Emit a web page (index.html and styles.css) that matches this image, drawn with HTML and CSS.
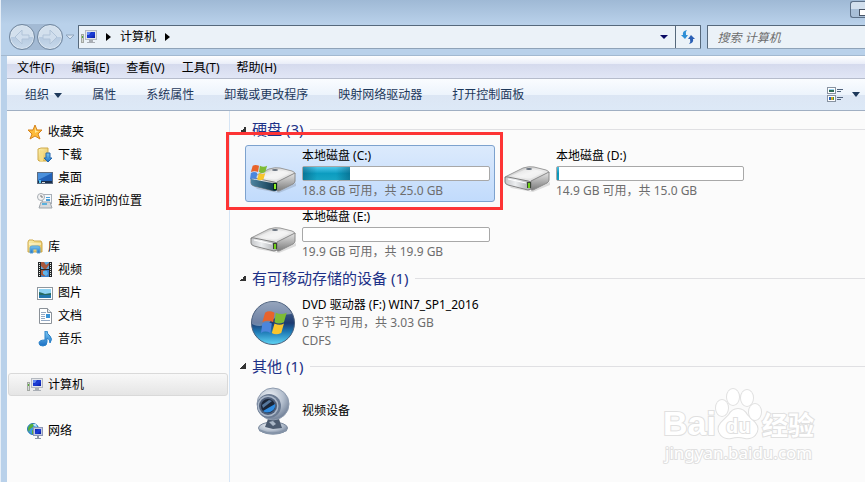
FILE: index.html
```html
<!DOCTYPE html>
<html lang="zh-CN">
<head>
    <meta charset="UTF-8">
    <meta name="viewport" content="width=device-width, initial-scale=1.0">
    <title>计算机</title>
    <link rel="stylesheet" href="styles.css">
</head>
<body>

<!-- shared icons -->
<svg class="defs" width="0" height="0" aria-hidden="true">
    <defs>
        <linearGradient id="screen" x1="0" y1="0" x2="1" y2="1">
            <stop offset="0" stop-color="#0a1ea8"/>
            <stop offset="0.5" stop-color="#1d3fd8"/>
            <stop offset="1" stop-color="#0818a0"/>
        </linearGradient>
        <linearGradient id="driveTop" x1="0" y1="0" x2="1" y2="1">
            <stop offset="0" stop-color="#b0b0b0"/>
            <stop offset="0.5" stop-color="#ececec"/>
            <stop offset="1" stop-color="#d2d2d2"/>
        </linearGradient>
        <linearGradient id="driveSide" x1="0" y1="0" x2="0" y2="1">
            <stop offset="0" stop-color="#e6e6e6"/>
            <stop offset="1" stop-color="#7b7b7b"/>
        </linearGradient>
        <linearGradient id="driveFront" x1="0" y1="0" x2="1" y2="0">
            <stop offset="0" stop-color="#c4c6c9"/>
            <stop offset="0.4" stop-color="#eceef0"/>
            <stop offset="1" stop-color="#a4a7aa"/>
        </linearGradient>
        <linearGradient id="driveDark" x1="0" y1="0" x2="1" y2="0">
            <stop offset="0" stop-color="#4d84a0"/>
            <stop offset="1" stop-color="#0d3348"/>
        </linearGradient>
        <linearGradient id="folder" x1="0" y1="0" x2="1" y2="1">
            <stop offset="0" stop-color="#fdf3b4"/>
            <stop offset="1" stop-color="#e2b94c"/>
        </linearGradient>
        <linearGradient id="blue" x1="0" y1="0" x2="0" y2="1">
            <stop offset="0" stop-color="#7cc8f2"/>
            <stop offset="1" stop-color="#1a6fc4"/>
        </linearGradient>
        <symbol id="computer" viewBox="0 0 16 16">
            <rect x="0.5" y="5.5" width="2" height="8" fill="#d5d9d5" stroke="#a3a8a3"/>
            <rect x="1" y="7" width="1" height="2" fill="#55b034"/>
            <rect x="4.500" y="1.500" width="11" height="9" fill="#e4e6ea" stroke="#b4b9c0"/>
            <rect x="6" y="3" width="8" height="6" fill="url(#screen)"/>
            <path d="M6 3h4l-2 3H6z" fill="#5f86f0"/>
            <path d="M8 11h4v2h2v1H6v-1h2z" fill="#a9aeb5"/>
        </symbol>
        <symbol id="drive" viewBox="0 0 48 28">
            <path d="M6 22 28 27 47 18v3L30 28 8 24z" fill="#000" opacity="0.12"/>
            <path d="M2 13 20 4q6-2 11-1l12 3q3 1 3 3L28 18 2 14z" fill="url(#driveTop)" stroke="#9a9a9a"/>
            <path d="M8 12 21 6q5-2 9-1l11 3-12 6q-3 1-7 0z" fill="#fff" opacity="0.45"/>
            <path d="M28 17 46 8v8q0 2-2 3L30 26h-2z" fill="url(#driveSide)" stroke="#8a8a8a"/>
            <path d="M2 14q0-2 3-1l20 4q3 0 3 3v4q0 2-3 2L5 21q-3-1-3-3z" fill="url(#driveFront)" stroke="#808080"/>
            <path d="M5 15l18 4" stroke="#fff"/>
            <ellipse cx="26" cy="5" rx="3" ry="1" fill="#66707c"/>
            <rect x="24" y="18" width="4" height="6" fill="#3b4436"/>
            <rect x="25" y="19" width="2" height="5" fill="#6fd01a"/>
        </symbol>
        <symbol id="flag" viewBox="0 0 20 20">
            <path d="M3 2q3-2 7 0L9 9Q5 7 1 9z" fill="#e8632b"/>
            <path d="M11 2q4 2 8 0l-2 7q-4 2-7 0z" fill="#7dbb35"/>
            <path d="M1 10q4-2 7 0l-1 7q-4-2-7 0z" fill="#4b86dd"/>
            <path d="M10 10q4 2 7 0l-2 7q-4 2-7 0z" fill="#f8c52c"/>
        </symbol>
    </defs>
</svg>

<div class="window">
    <header class="titlebar">
        <div class="controls">
            <button class="minimize" aria-label="最小化"></button>
        </div>
        <div class="navbar">
            <div class="history">
                <button class="round" aria-label="后退">
                    <svg width="16" height="16" viewBox="0 0 16 16"><path d="M8 1 1 8l7 7v-5h7V6H8z"/></svg>
                </button>
                <button class="round" aria-label="前进">
                    <svg width="16" height="16" viewBox="0 0 16 16"><path d="M8 1l7 7-7 7v-5H1V6h7z"/></svg>
                </button>
            </div>
            <button class="recent" aria-label="最近的页面">
                <svg width="10" height="6" viewBox="0 0 10 6"><path d="M1 1h8L5 5z" fill="#dbe7f3" stroke="#8ea4bd"/></svg>
            </button>
            <div class="address">
                <svg width="16" height="16"><use href="#computer"/></svg>
                <svg class="sep" width="5" height="8" viewBox="0 0 5 8"><path d="M0 0 5 4 0 8z"/></svg>
                <a href="#">计算机</a>
                <svg class="sep" width="5" height="8" viewBox="0 0 5 8"><path d="M0 0 5 4 0 8z"/></svg>
                <button class="drop" aria-label="展开地址">
                    <svg width="8" height="4" viewBox="0 0 8 4"><path d="M0 0h8L4 4z" fill="#0a0a64"/></svg>
                </button>
                <button class="refresh" aria-label="刷新">
                    <svg width="14" height="14" viewBox="0 0 14 14">
                        <path d="M6 0Q1 1 2 5H0l4 4 3-4H5Q4 2 6 0z" fill="#2e8fd6"/>
                        <path d="M8 14q5-1 4-5h2l-4-4-3 4h2q1 3-1 5z" fill="#2a5fb5"/>
                    </svg>
                </button>
            </div>
            <input class="search" type="text" placeholder="搜索 计算机" aria-label="搜索 计算机">
        </div>
    </header>

    <nav class="menubar">
        <a href="#">文件(F)</a>
        <a href="#">编辑(E)</a>
        <a href="#">查看(V)</a>
        <a href="#">工具(T)</a>
        <a href="#">帮助(H)</a>
    </nav>

    <div class="toolbar">
        <button>组织 <svg width="8" height="5" viewBox="0 0 8 5"><path d="M0 0h8L4 5z" fill="#1e395b"/></svg></button>
        <button>属性</button>
        <button>系统属性</button>
        <button>卸载或更改程序</button>
        <button>映射网络驱动器</button>
        <button>打开控制面板</button>
        <button class="view" aria-label="更改视图">
            <svg width="17" height="16" viewBox="0 0 17 16">
                <rect x="0.5" y="0.5" width="8" height="6" fill="#fff" stroke="#8792a0"/>
                <path d="M2 2h5v1H2z" fill="#9fd4ee"/><path d="M2 3h5v2H2z" fill="#2f6b56"/>
                <rect x="0.5" y="8.5" width="8" height="6" fill="#fff" stroke="#8792a0"/>
                <path d="M2 10h2v3H2z" fill="#2d62b8"/><path d="M4 10h2v3H4z" fill="#d9a520"/><path d="M6 10h1v3H6z" fill="#3f9442"/>
                <path d="M10 2h6v1h-6zM10 4h4v1h-4zM10 10h6v1h-6zM10 12h4v1h-4z" fill="#50627c"/>
            </svg>
            <svg width="8" height="5" viewBox="0 0 8 5"><path d="M0 0h8L4 5z" fill="#1e395b"/></svg>
        </button>
    </div>

    <div class="body">
        <aside class="sidebar">
            <ul>
                <li><a href="#">
                    <svg width="16" height="16" viewBox="0 0 16 16"><path d="M8 1l2 5h5l-4 4 2 5-5-3-5 3 2-5-4-4h5z" fill="#fdbb3b" stroke="#d5831c"/><path d="M8 3l1 4h3L8 9z" fill="#ffe79a"/></svg>
                    收藏夹</a></li>
                <li class="child"><a href="#">
                    <svg width="16" height="16" viewBox="0 0 16 16"><path d="M1 2l3-1h7v13H2l-1-1z" fill="url(#folder)" stroke="#cfa94a"/><path d="M3 3l3 1v11l-3-1z" fill="#f5dd86"/><path d="M9 6h4v5h2l-4 4-4-4h2z" fill="url(#blue)" stroke="#2467ad"/></svg>
                    下载</a></li>
                <li class="child"><a href="#">
                    <svg width="16" height="16" viewBox="0 0 16 16"><rect x="0.5" y="2.500" width="15" height="11" fill="#2161b8" stroke="#5b6b80"/><path d="M1 3h14L1 10z" fill="#4a90dc"/><path d="M1 11h14v2H1z" fill="#1a2f4d"/><path d="M2 10h2v3H2z" fill="#56c5f2"/><path d="M5 12h3v1H5z" fill="#dcdcdc"/></svg>
                    桌面</a></li>
                <li class="child"><a href="#">
                    <svg width="16" height="16" viewBox="0 0 16 16"><rect x="5.500" y="1.500" width="9" height="9" fill="#f5f8fb" stroke="#a9b0b8"/><path d="M9 4h4v1H9zM9 6h4v2H9z" fill="#4aa0d8"/><path d="M4 9h9l2 6H2z" fill="#d6d9dc" stroke="#9fa5ab"/><path d="M5 10h5v2H5z" fill="#5bb0dd"/><circle cx="4" cy="4" r="3.500" fill="#f4f4f4" stroke="#a7adb3"/><path d="M4 2v2h2" fill="none" stroke="#777"/></svg>
                    最近访问的位置</a></li>
            </ul>
            <ul>
                <li><a href="#">
                    <svg width="16" height="16" viewBox="0 0 16 16"><path d="M1 3l1-2h4l1 1h7l1 2v9H1z" fill="url(#folder)" stroke="#cfa94a"/><path d="M2 5h12" stroke="#fffbe0"/><path d="M3 14V9q0-2 2-2h6q2 0 2 2v5h-3v-4H6v4z" fill="url(#blue)" stroke="#5da3d6"/></svg>
                    库</a></li>
                <li class="child"><a href="#">
                    <svg width="16" height="16" viewBox="0 0 16 16"><rect x="1" y="0" width="14" height="15" fill="#26292c"/><path d="M4 0h8v7H4z" fill="#5fa9de"/><path d="M4 8h8v7H4z" fill="#3c82cd"/><path d="M4 0h3l2 3 3-2v2L9 7H7L4 4zM4 8h3l3 3-1 2-2 1-3-1z" fill="#a8583c"/><path d="M6 9h4l1 3-2 2-3-2z" fill="#5fb4ec"/><path d="M2 1v13M13 1v13" transform="translate(.5 0)" stroke="#e8efe9" stroke-dasharray="1 1"/></svg>
                    视频</a></li>
                <li class="child"><a href="#">
                    <svg width="16" height="16" viewBox="0 0 16 16"><rect x="0.5" y="2.500" width="15" height="12" fill="#fff" stroke="#8f979e"/><path d="M2 4h12v9H2z" fill="#8fd3f3"/><path d="M2 7q4 1 6 2l6-1v5H2z" fill="#276b62"/><path d="M2 10h12v3H2z" fill="#2377ad"/></svg>
                    图片</a></li>
                <li class="child"><a href="#">
                    <svg width="16" height="16" viewBox="0 0 16 16"><path d="M2.500.5h8l4 4v11h-12z" fill="#fff" stroke="#8a9198"/><path d="M10.500.5v4h4" fill="#e4e8ec" stroke="#8a9198"/><path d="M4 4h5M4 6h4M4 8h4M4 10h4M4 12h9" transform="translate(0 .5)" stroke="#93a9c4"/><path d="M9 6h4v4H9z" fill="#3a92d6"/></svg>
                    文档</a></li>
                <li class="child"><a href="#">
                    <svg width="16" height="16" viewBox="0 0 16 16"><path d="M8 0h2q0 3 3 5 3 3 0 7 0-4-3-5v4q0 4-4 4-4 0-4-3t6-3z" fill="url(#blue)" stroke="#2a81c9"/></svg>
                    音乐</a></li>
            </ul>
            <ul>
                <li class="selected"><a href="#">
                    <svg width="16" height="16"><use href="#computer"/></svg>
                    计算机</a></li>
            </ul>
            <ul>
                <li><a href="#">
                    <svg width="16" height="16" viewBox="0 0 16 16"><circle cx="6" cy="6" r="5.500" fill="#3d9be0" stroke="#2676b5"/><path d="M2 3q2-3 5-2L6 4 3 6 2 9Q0 6 2 3zM5 7l3 1-1 3H5z" fill="#56ad3a"/><path d="M6 1h3l1 3-3-1z" fill="#b9e4fa"/><rect x="6.500" y="4.500" width="9" height="8" fill="#c3cbe0" stroke="#8d96b4"/><path d="M8 6h6v5H8z" fill="url(#screen)"/><path d="M10 13h2v2h2v1H8v-1h2z" fill="#8d96a4"/></svg>
                    网络</a></li>
            </ul>
        </aside>

        <main class="content">
            <section>
                <h2><i class="arrow"></i>硬盘 (3)</h2>
                <div class="tiles">
                    <div class="tile active">
                        <div class="icon disk">
                            <svg width="48" height="36" viewBox="0 0 48 36">
                                <use href="#drive" x="0" y="5" width="48" height="28"/>
                                <path d="M2 19l26 5v5q0 2-3 2L5 26q-3-1-3-3z" fill="url(#driveDark)"/>
                                <path d="M24 23h4v7h-4z" fill="#0d2b1c"/>
                                <path d="M25 24h2v5h-2z" fill="#8cf02a"/>
                                <use href="#flag" x="1" y="4" width="18" height="18"/>
                            </svg>
                        </div>
                        <div class="info">
                            <p class="name">本地磁盘 (C:)</p>
                            <div class="bar"><div class="used" style="width: 25%"></div></div>
                            <p>18.8 GB 可用，共 25.0 GB</p>
                        </div>
                        <div class="highlight"></div>
                    </div>
                    <div class="tile">
                        <div class="icon disk"><svg width="48" height="28"><use href="#drive"/></svg></div>
                        <div class="info">
                            <p class="name">本地磁盘 (D:)</p>
                            <div class="bar"><div class="used" style="width: 1%"></div></div>
                            <p>14.9 GB 可用，共 15.0 GB</p>
                        </div>
                    </div>
                    <div class="tile">
                        <div class="icon disk"><svg width="48" height="28"><use href="#drive"/></svg></div>
                        <div class="info">
                            <p class="name">本地磁盘 (E:)</p>
                            <div class="bar"></div>
                            <p>19.9 GB 可用，共 19.9 GB</p>
                        </div>
                    </div>
                </div>
            </section>

            <section>
                <h2><i class="arrow"></i>有可移动存储的设备 (1)</h2>
                <div class="tiles">
                    <div class="tile">
                        <div class="icon">
                            <svg width="46" height="46" viewBox="0 0 46 46">
                                <defs>
                                    <linearGradient id="orb" x1="0" y1="0" x2="0" y2="1">
                                        <stop offset="0" stop-color="#5b7398"/>
                                        <stop offset="0.5" stop-color="#1c3a70"/>
                                        <stop offset="0.7" stop-color="#1d78b4"/>
                                        <stop offset="1" stop-color="#5fd6f6"/>
                                    </linearGradient>
                                </defs>
                                <circle cx="23" cy="23" r="21.500" fill="url(#orb)" stroke="#4a5f7c"/>
                                <path d="M2 24A21 21 0 0 1 42 14Q26 14 18 24 9 28 2 24z" fill="#fff" opacity="0.36"/>
                                <use href="#flag" x="11" y="10" width="27" height="27"/>
                            </svg>
                        </div>
                        <div class="info">
                            <p class="name">DVD 驱动器 (F:) WIN7_SP1_2016</p>
                            <p>0 字节 可用，共 3.03 GB</p>
                            <p>CDFS</p>
                        </div>
                    </div>
                </div>
            </section>

            <section>
                <h2><i class="arrow"></i>其他 (1)</h2>
                <div class="tiles">
                    <div class="tile">
                        <div class="icon">
                            <svg width="36" height="50" viewBox="0 0 36 50">
                                <defs>
                                    <radialGradient id="ball" cx="0.4" cy="0.3" r="0.7">
                                        <stop offset="0" stop-color="#f1f4f8"/>
                                        <stop offset="0.6" stop-color="#b4bfce"/>
                                        <stop offset="1" stop-color="#74839a"/>
                                    </radialGradient>
                                </defs>
                                <ellipse cx="18" cy="42" rx="14.500" ry="6" fill="url(#ball)" stroke="#7a889c"/>
                                <path d="M4 43q14 7 28 0v2q-14 7-28 0z" fill="#8594a8"/>
                                <path d="M13 33h11l3 9-9 1-8-2z" fill="#4c5b70"/>
                                <path d="M14 36l4 4 3-2-3-3z" fill="#a9b6c6"/>
                                <circle cx="18" cy="18" r="16" fill="url(#ball)" stroke="#8e9bae"/>
                                <circle cx="14" cy="20" r="12" fill="#6a7a92"/>
                                <circle cx="13" cy="20" r="10.500" fill="#a9b6c8"/>
                                <circle cx="13" cy="20" r="9" fill="#4c5d78"/>
                                <circle cx="13" cy="20" r="7" fill="#1b2638"/>
                                <path d="M8 25 20 18q1 4-3 7-5 3-9 0z" fill="#2f8be0"/>
                                <path d="M7 19l7-5 3 1-9 7z" fill="#56779c"/>
                            </svg>
                        </div>
                        <div class="info">
                            <p class="name">视频设备</p>
                        </div>
                    </div>
                </div>
            </section>
        </main>
    </div>
</div>

<svg class="watermark" width="160" height="80" viewBox="0 0 160 80">
    <g class="outline">
        <text class="logo" x="1" y="49">Bai</text>
        <text class="logo-cn" x="100" y="49">经验</text>
        <path d="M76 23q6 0 9 6l8 8q5 6 0 12-4 4-10 3-7-2-14 0-6 1-10-3-5-6 0-12l8-8q3-6 9-6z"/>
        <ellipse cx="60" cy="22" rx="6" ry="8"/>
        <ellipse cx="71" cy="11" rx="6" ry="8"/>
        <ellipse cx="85" cy="12" rx="6" ry="8"/>
        <ellipse cx="93" cy="26" rx="6" ry="8"/>
        <text class="logo-du" x="64" y="47">du</text>
        <text class="url" x="3" y="73">jingyan.baidu.com</text>
    </g>
</svg>

</body>
</html>
```
FILE: styles.css
```css
* {
    box-sizing: border-box;
}
body {
    margin: 0;
    position: relative;
    overflow: hidden;
    font-family: "Noto Sans", "Noto Sans CJK SC", sans-serif;
    font-size: 12px;
    line-height: 18px;
    color: #000;
    background-color: #fbfbfb;
}
h2, p, ul {
    margin: 0;
    padding: 0;
    font-weight: normal;
}
a {
    color: inherit;
    text-decoration: none;
}
button {
    font: inherit;
    color: inherit;
    background: none;
    border: none;
    padding: 0;
}
svg {
    flex: none;
}
.defs {
    position: absolute;
}
.window {
    display: flex;
    flex-direction: column;
    min-height: 100vh;
    padding-left: 7px;
    background: linear-gradient(to right, #e6eef7 1px, #b9d1ea 1px);
}

/* title bar */
.titlebar {
    margin-left: -6px;
    height: 56px;
    background: linear-gradient(#9fb9d5, #b9d1ea 24px, #b9d1ea);
    border-bottom: 1px solid #a3b9d0;
}
.controls {
    display: flex;
    justify-content: flex-end;
    height: 24px;
    padding-top: 1px;
}
.minimize {
    width: 15px;
    height: 17px;
    border: 1px solid #5c7088;
    border-right: none;
    border-radius: 3px 0 0 3px;
    background: linear-gradient(#d3e0ee 50%, #a8bfd8 50%);
    padding: 6px 0 0 8px;
}
.minimize::before {
    content: "";
    display: block;
    height: 5px;
    border: 1px solid #4a5668;
    border-right: none;
    background-color: #fff;
}
.navbar {
    display: flex;
    align-items: center;
    height: 26px;
    padding-left: 8px;
}
.history {
    display: flex;
    gap: 2px;
    border-radius: 14px;
    background-color: #a3bad4;
}
.round {
    display: flex;
    align-items: center;
    justify-content: center;
    width: 26px;
    height: 26px;
    border: 1px solid #71879f;
    border-radius: 50%;
    background: linear-gradient(#d3e0ed 50%, #b6cae0 50%, #c9daec);
    box-shadow: inset 0 0 0 1px #dbe6f1;
}
.round path {
    fill: #d0deed;
    stroke: #b0c3d8;
}
.recent {
    display: flex;
    margin: 0 3px 0 2px;
}
.address {
    flex: 9 1 0;
    display: flex;
    align-items: center;
    height: 24px;
    padding-left: 2px;
    border: 1px solid #56697c;
    border-bottom-color: #8fa3b8;
    border-radius: 1px;
    background-color: #ebf2f8;
}
.sep {
    margin: 0 9px;
}
.drop {
    display: flex;
    margin-left: auto;
    padding: 0 7px;
}
.refresh {
    display: flex;
    align-items: center;
    justify-content: center;
    width: 25px;
    height: 22px;
    border-left: 1px solid #56697c;
}
.search {
    flex: 2 1 0;
    min-width: 0;
    height: 24px;
    margin-left: 6px;
    padding: 0 10px;
    border: 1px solid #56697c;
    border-right: none;
    border-bottom-color: #8fa3b8;
    border-radius: 1px 0 0 1px;
    background-color: #ebf2f8;
    font: inherit;
    font-style: italic;
}
.search::placeholder {
    color: #6d6d6d;
    opacity: 1;
}

/* menu and toolbar */
.menubar {
    display: flex;
    align-items: center;
    gap: 17px;
    height: 23px;
    padding: 2px 0 0 10px;
    background: linear-gradient(#fff, #e9edf8 8px, #d5daed 8px, #e1e6f6);
    border-bottom: 1px solid #b6bccc;
}
.toolbar {
    display: flex;
    align-items: center;
    gap: 30px;
    height: 32px;
    padding: 0 5px 0 18px;
    color: #1e395b;
    background: linear-gradient(#fafcff, #edf4fc 50%, #dce6f4 50%, #dde9f7);
    border-bottom: 1px solid #a0afc3;
}
.toolbar button svg {
    margin-left: 2px;
    vertical-align: 1px;
}
.toolbar .view {
    display: flex;
    align-items: center;
    gap: 6px;
    margin-left: auto;
}

/* left pane */
.body {
    flex: 1;
    display: flex;
    background-color: #fbfbfb;
}
.sidebar {
    flex: none;
    width: 223px;
    padding: 9px 1px 0;
    border-right: 1px solid #d6e5f5;
}
.sidebar ul {
    list-style: none;
    margin-bottom: 23px;
}
.sidebar a {
    display: flex;
    align-items: center;
    gap: 5px;
    height: 23px;
    padding-left: 18px;
    border: 1px solid transparent;
    border-radius: 3px;
}
.sidebar .child a {
    padding-left: 28px;
}
.sidebar .selected a {
    border-color: #d9d9d9;
    background: linear-gradient(#f8f8f8, #e5e5e5);
}

/* drives */
.content {
    flex: 1;
    min-width: 0;
    padding: 7px 0 0 10px;
}
.content section {
    margin-bottom: 4px;
}
.content h2 {
    display: flex;
    align-items: center;
    height: 22px;
    font-size: 15px;
    color: #1e3287;
}
.content h2::after {
    content: "";
    flex: 1;
    height: 1px;
    margin-left: 7px;
    background-color: #e0e0e3;
}
.arrow {
    width: 6px;
    height: 6px;
    margin-right: 6px;
    background: linear-gradient(135deg, transparent 50%, #333 50%);
}
.tiles {
    display: flex;
    flex-wrap: wrap;
    gap: 4px;
    padding: 5px 0 0 5px;
}
.tile {
    position: relative;
    display: flex;
    align-items: center;
    gap: 5px;
    width: 250px;
    height: 57px;
    padding: 0 4px 0 2px;
    border: 1px solid transparent;
    border-radius: 3px;
}
.tile.active {
    border-color: #7da2ce;
    background: linear-gradient(#dceafc, #c1dbfc);
}
.icon {
    display: flex;
    justify-content: center;
    width: 49px;
}
.icon.disk {
    padding-top: 8px;
}
.info {
    flex: 1;
    white-space: nowrap;
    color: #6d6d6d;
}
.info .name {
    color: #000;
}
.bar {
    height: 15px;
    margin: 1px 0;
    border: 1px solid #a8a8a8;
    border-radius: 2px;
    background-color: #fff;
}
.used {
    height: 100%;
    background:
        linear-gradient(to right, rgba(0, 60, 90, 0.4), transparent 30%, transparent 70%, rgba(0, 60, 90, 0.4)),
        linear-gradient(#4cc6ea, #0c9cc0 50%, #18a5c4);
}

/* red frame over the selected drive */
.highlight {
    position: absolute;
    top: -14px;
    right: -9px;
    bottom: -9px;
    left: -20px;
    border: 3px solid #fd3435;
    z-index: 1;
}

.watermark {
    position: absolute;
    right: 43px;
    bottom: 16px;
}
.outline {
    fill: #fff;
    stroke: #e0e0e0;
    stroke-width: 2px;
    paint-order: stroke;
    font-family: "Liberation Sans", "Noto Sans CJK SC", sans-serif;
    font-weight: bold;
}
.logo {
    font-size: 34px;
}
.logo-cn {
    font-size: 26px;
}
.logo-du {
    font-size: 20px;
}
.url {
    font-family: "Noto Sans", sans-serif;
    font-size: 17px;
    font-weight: normal;
}
```
